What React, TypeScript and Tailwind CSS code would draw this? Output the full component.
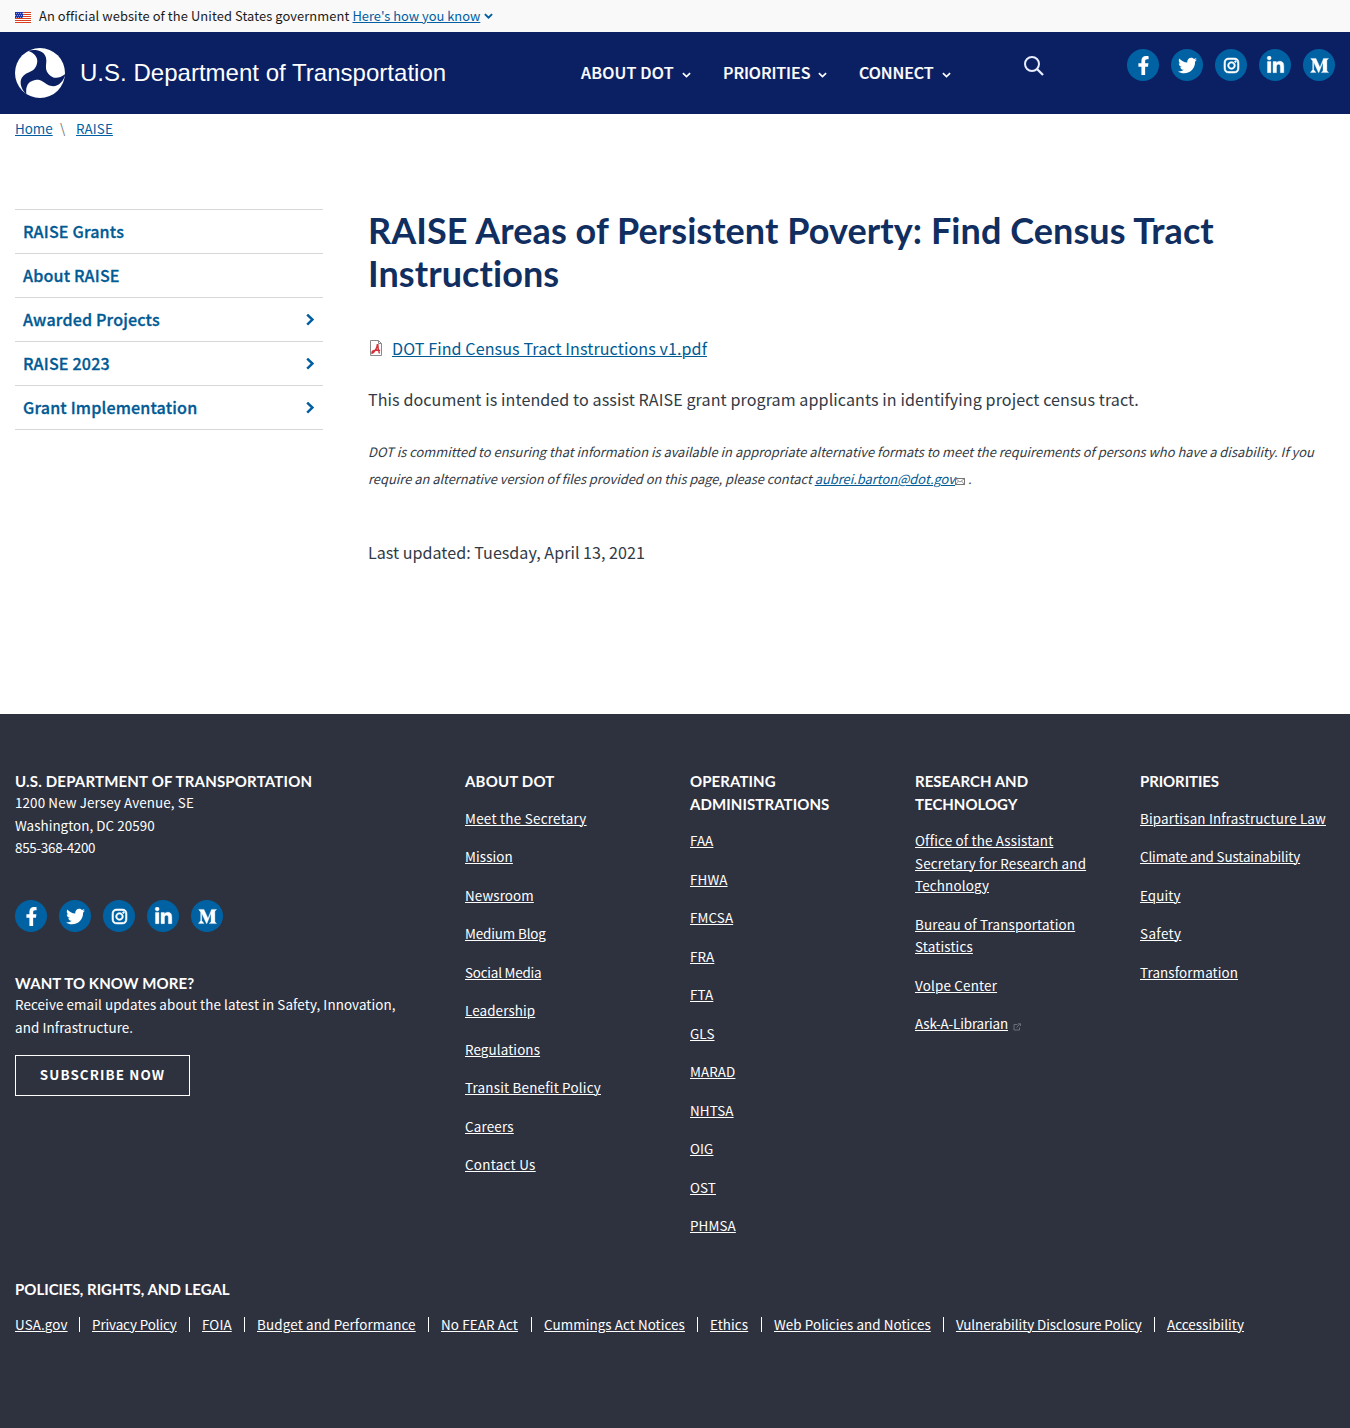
import { FaFacebookF, FaInstagram, FaLinkedinIn, FaMediumM, FaTwitter } from 'react-icons/fa';

const sideItems = [
  { label: 'RAISE Grants', more: false },
  { label: 'About RAISE', more: false },
  { label: 'Awarded Projects', more: true },
  { label: 'RAISE 2023', more: true },
  { label: 'Grant Implementation', more: true },
];

type FooterLink = { label: string; tracking?: string };

const columns: { title: string; tracking: string; links: FooterLink[] }[] = [
  {
    title: 'About DOT',
    tracking: 'tracking-[0.18px]',
    links: [
      { label: 'Meet the Secretary', tracking: 'tracking-[0.28px]' },
      { label: 'Mission' },
      { label: 'Newsroom' },
      { label: 'Medium Blog', tracking: 'tracking-[-0.12px]' },
      { label: 'Social Media', tracking: 'tracking-[-0.2px]' },
      { label: 'Leadership' },
      { label: 'Regulations' },
      { label: 'Transit Benefit Policy', tracking: 'tracking-[0.21px]' },
      { label: 'Careers', tracking: 'tracking-[0.2px]' },
      { label: 'Contact Us', tracking: 'tracking-[0.3px]' },
    ],
  },
  {
    title: 'Operating Administrations',
    tracking: 'tracking-[0.09px]',
    links: ['FAA', 'FHWA', 'FMCSA', 'FRA', 'FTA', 'GLS', 'MARAD', 'NHTSA', 'OIG', 'OST', 'PHMSA'].map((label) => ({ label })),
  },
  {
    title: 'Research and Technology',
    tracking: 'tracking-[0px]',
    links: [
      { label: 'Office of the Assistant Secretary for Research and Technology', tracking: 'tracking-[0.17px]' },
      { label: 'Bureau of Transportation Statistics', tracking: 'tracking-[0.17px]' },
      { label: 'Volpe Center', tracking: 'tracking-[0.2px]' },
      { label: 'Ask-A-Librarian', tracking: 'tracking-[-0.14px]' },
    ],
  },
  {
    title: 'Priorities',
    tracking: 'tracking-[-0.1px]',
    links: [
      { label: 'Bipartisan Infrastructure Law', tracking: 'tracking-[0.17px]' },
      { label: 'Climate and Sustainability', tracking: 'tracking-[-0.12px]' },
      { label: 'Equity' },
      { label: 'Safety', tracking: 'tracking-[0.4px]' },
      { label: 'Transformation' },
    ],
  },
];

const policies = [
  { label: 'USA.gov', style: 'w-[52px]' },
  { label: 'Privacy Policy', style: 'w-[85px] tracking-[-0.1px]' },
  { label: 'FOIA', style: 'w-[30px]' },
  { label: 'Budget and Performance', style: 'w-[159px] tracking-[0.16px]' },
  { label: 'No FEAR Act', style: 'w-[78px]' },
  { label: 'Cummings Act Notices', style: 'w-[141px] tracking-[0.08px]' },
  { label: 'Ethics', style: 'w-[39px]' },
  { label: 'Web Policies and Notices', style: 'w-[157px] tracking-[0.08px]' },
  { label: 'Vulnerability Disclosure Policy', style: 'w-[186px] tracking-[-0.04px]' },
  { label: 'Accessibility', style: 'w-[77px] tracking-[0.05px]' },
];

function Flag() {
  return (
    <svg width="16" height="11" viewBox="0 0 16 11" shapeRendering="crispEdges">
      <rect width="16" height="11" fill="#fff" />
      {[0, 2, 4, 6, 8, 10].map((y) => (
        <rect key={y} y={y} width="16" height="1" fill="#db3e1f" />
      ))}
      <rect width="8" height="6" fill="#1e33b1" />
      {[1, 3, 5, 7].map((x) => (
        <g key={x} fill="#8f9cd6">
          <rect x={x} y="1" width="1" height="1" />
          <rect x={x - 1} y="3" width="1" height="1" />
          <rect x={x} y="5" width="1" height="1" />
        </g>
      ))}
    </svg>
  );
}

function Triskelion() {
  return (
    <svg width="50" height="50" viewBox="-75 -75 150 150">
      <circle r="75" fill="#fff" />
      <path
        fill="#0a2063"
        d="M-36 -67 C-15 -72 18 -69 19 -38 C19 -22 14 -12 25 2 C37 17 55 20 76 3 C72.8 23.7 50.8 50.1 23.4 35.5 C9.6 27.5 3.4 18.1 -14.2 20.7 C-33.2 23.5 -44.8 37.6 -40.6 64.3 C-57.6 48.4 -68.8 18.9 -42.4 2.5 C-28.6 -5.5 -17.4 -6.1 -10.8 -22.7 C-3.8 -40.5 -10.2 -57.6 -36 -67 Z"
      />
    </svg>
  );
}

function Chevron({ className, stroke }: { className: string; stroke: number }) {
  return (
    <svg className={className} viewBox="0 0 10 6" fill="none" stroke="currentColor" strokeWidth={stroke}>
      <path d="M1 0.9 L5 4.8 L9 0.9" />
    </svg>
  );
}

function Social() {
  const circle = 'flex size-8 items-center justify-center rounded-full bg-[#0062a3] text-white';
  return (
    <div className="flex gap-3">
      <a className={circle}><FaFacebookF className="size-[19px]" /></a>
      <a className={circle}><FaTwitter className="size-[19px]" /></a>
      <a className={circle}><FaInstagram className="size-[17px]" stroke="#fff" strokeWidth="20" /></a>
      <a className={circle}><FaLinkedinIn className="size-[19px]" stroke="#fff" strokeWidth="10" /></a>
      <a className={circle}><FaMediumM className="ml-px size-[19px]" stroke="#fff" strokeWidth="8" /></a>
    </div>
  );
}

export default function App() {
  const link = 'underline decoration-1 underline-offset-[1px]';
  const footHead = "font-[Lato,sans-serif] text-[15px] leading-[22.5px] font-bold uppercase";
  return (
    <div className="min-h-[1428px] bg-white font-['Noto_Sans_CJK_SC',sans-serif] text-[#323a45]">
      <div className="flex h-8 items-center bg-[#f9f9f9] px-[15px] text-[12.9px] leading-5 tracking-[0.09px] text-[#1b1b1b]">
        <div className="pt-[3px]"><Flag /></div>
        <span className="ml-2">An official website of the United States government</span>
        <a className={'ml-[3px] tracking-[0px] text-[#005ea2] ' + link}>Here's how you know</a>
        <Chevron className="ml-1 h-[6px] w-[9px] text-[#005ea2]" stroke={2.2} />
      </div>

      <header className="flex h-[82px] items-start bg-[#0a2063] pr-[15px] pl-[15px] text-white">
        <div className="flex w-[566px] items-center pt-4">
          <Triskelion />
          <span className="ml-[15px] font-['Liberation_Sans',sans-serif] text-[24px] leading-[48px] tracking-[0.02px] whitespace-nowrap">U.S. Department of Transportation</span>
        </div>
        <nav className="flex gap-8 pt-[26px] text-[16.1px] leading-[28px] font-medium whitespace-nowrap [-webkit-text-stroke:0.2px]">
          {[
            { label: 'ABOUT DOT', tracking: 'w-[93px] tracking-[0.2px]' },
            { label: 'PRIORITIES', tracking: 'w-[87px] tracking-[-0.05px]' },
            { label: 'CONNECT', tracking: 'w-[75px] tracking-[-0.1px]' },
          ].map((n) => (
            <a key={n.label} className="flex items-center">
              <span className={n.tracking}>{n.label}</span>
              <Chevron className="mt-[5px] ml-2 h-[6px] w-[9px]" stroke={1.8} />
            </a>
          ))}
        </nav>
        <svg className="mt-6 ml-[73px] size-5" viewBox="0 0 20 20" fill="none" stroke="#e8edff" strokeWidth="2">
          <circle cx="8" cy="8" r="7" />
          <path d="M13 13 L19 19" strokeWidth="2.3" />
        </svg>
        <div className="ml-auto pt-[17px]"><Social /></div>
      </header>

      <div className="flex h-[28px] items-center px-[15px] text-[13.4px] text-[#005ea2]">
        <a className={'w-[37px] ' + link}>Home</a>
        <span className="ml-2 w-4 text-[#71767a]">\</span>
        <a className={'tracking-[0.1px] ' + link}>RAISE</a>
      </div>

      <main className="flex h-[572px] px-[15px] pt-[67px]">
        <ul className="mr-[45px] h-fit w-[308px] border-t border-[#d6d7d9] text-[#005a94]">
          {sideItems.map((s) => (
            <li key={s.label} className="flex h-11 items-center justify-between border-b border-[#d6d7d9] px-2 text-[16.1px] leading-[27px] font-medium tracking-[0.16px] [-webkit-text-stroke:0.3px]">
              <span>{s.label}</span>
              {s.more && (
                <svg className="size-3" viewBox="0 0 12 12" fill="none" stroke="#005ea2" strokeWidth="2.5">
                  <path d="M4.2 0.6 L9.4 5.6 L4.2 10.6" />
                </svg>
              )}
            </li>
          ))}
        </ul>
        <article className="w-[967px] text-[16.1px] leading-[27px] tracking-[0.088px]">
          <h1 className="w-[900px] font-[Lato,sans-serif] text-[36px] leading-[43px] font-bold tracking-[0.07px] text-[#112e60]">
            RAISE Areas of Persistent Poverty: Find Census Tract Instructions
          </h1>
          <p className="mt-10 flex items-center">
            <svg className="-mt-0.5" width="16" height="16" viewBox="0 0 16 16" fill="none">
              <path d="M2.5 .5 h8 l3 3 v12 h-11 z" fill="#fff" stroke="#8a8a8a" />
              <path d="M10.5 .5 v3 h3" stroke="#8a8a8a" />
              <path d="M9.5 4 C9.2 8 6.5 12.5 4 13.2 C3.6 10.5 8 9.6 12.2 10.6 M9.8 4 C10 8 10 11 11.6 13.4" stroke="#d1333d" strokeWidth="1.5" />
            </svg>
            <a className={'ml-2 text-[#005a94] ' + link}>DOT Find Census Tract Instructions v1.pdf</a>
          </p>
          <p className="mt-6">This document is intended to assist RAISE grant program applicants in identifying project census tract.</p>
          <p className="mt-[25px] text-[12.9px] tracking-[0.01px] italic">
            DOT is committed to ensuring that information is available in appropriate alternative formats to meet the requirements of persons who have a disability. If you
            <br />
            <span className="tracking-[-0.01px]">require an alternative version of files provided on this page, please contact </span>
            <a className={'tracking-[0px] text-[#005a94] ' + link}>aubrei.barton@dot.gov</a>
            <svg className="inline-block align-[-1px]" width="10" height="8" viewBox="0 0 10 8" fill="none" stroke="#777">
              <rect x=".5" y="1.5" width="9" height="6" />
              <path d="M.5 1.5 L5 5 L9.5 1.5 M.5 7.5 L3.5 4 M9.5 7.5 L6.5 4" strokeWidth=".8" />
            </svg>{' '}
            .
          </p>
          <p className="mt-[47px] tracking-[0.02px]">Last updated: Tuesday, April 13, 2021</p>
        </article>
      </main>

      <footer className="h-[714px] bg-[#2e323f] px-[15px] pt-[56px] text-[13.4px] leading-[22.5px] tracking-[0.12px] text-white">
        <div className="flex h-[508px]">
          <section className="w-[450px]">
            <h2 className={'tracking-[0.18px] ' + footHead}>U.S. Department of Transportation</h2>
            <p className="-mt-[1.5px]">
              1200 New Jersey Avenue, SE
              <br />
              <span className="tracking-[0.05px]">Washington, DC 20590</span>
              <br />
              <span className="tracking-[-0.28px]">855-368-4200</span>
            </p>
            <div className="mt-[41.5px]"><Social /></div>
            <h2 className={'mt-[39.5px] tracking-[0.08px] ' + footHead}>Want to know more?</h2>
            <p className="-mt-px w-[400px] tracking-[0.1px]">Receive email updates about the latest in Safety, Innovation, and Infrastructure.</p>
            <a className="mt-[17px] flex h-[41px] w-[175px] items-center justify-center border border-white pb-0.5 font-bold tracking-[1.12px]">SUBSCRIBE NOW</a>
          </section>
          {columns.map((c, i) => (
            <section key={c.title} className={i === 3 ? 'w-[195px]' : 'w-[225px] pr-[30px]'}>
              <h2 className={c.tracking + ' ' + footHead}>{c.title}</h2>
              <ul className="mt-[14px] flex flex-col gap-4">
                {c.links.map((l) => (
                  <li key={l.label} className={l.tracking}>
                    <a className={link}>{l.label}</a>
                    {l.label === 'Ask-A-Librarian' && (
                      <svg className="mt-[3px] ml-[5px] inline-block" width="8" height="8" viewBox="0 0 8 8" fill="none" stroke="#6b6e78">
                        <path d="M4.5 1.5 H1 V7 H6.5 V4.5 M5 .8 H7.5 V3 M7.3 .8 L3.5 4.5" />
                      </svg>
                    )}
                  </li>
                ))}
              </ul>
            </section>
          ))}
        </div>
        <h2 className={'tracking-[0px] ' + footHead}>Policies, Rights, and Legal</h2>
        <div className="mt-[12.5px] flex items-center whitespace-nowrap">
          {policies.map((p, i) => (
            <div key={p.label} className="flex items-center">
              {i > 0 && <span className="mx-3 h-[15px] w-px bg-white" />}
              <a className={p.style + ' ' + link}>{p.label}</a>
            </div>
          ))}
        </div>
      </footer>
    </div>
  );
}
